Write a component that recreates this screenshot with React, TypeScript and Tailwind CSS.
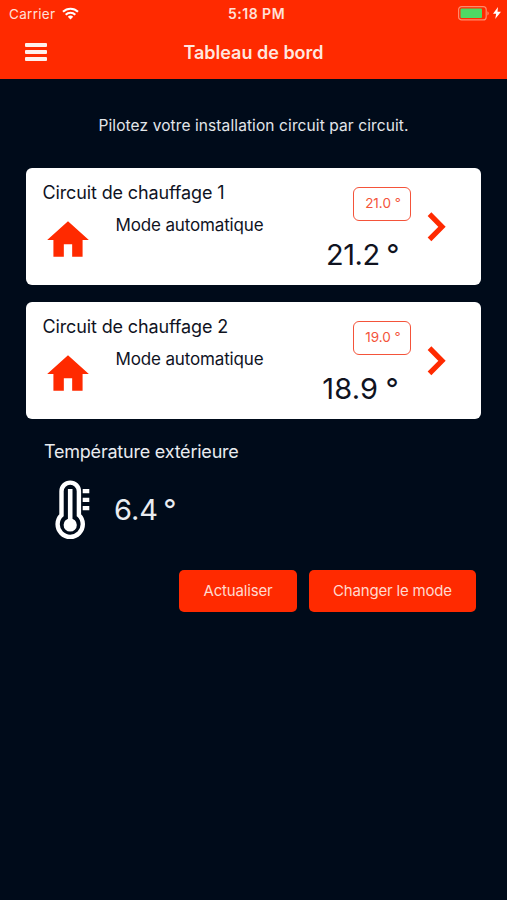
import { MdHome } from 'react-icons/md'

const circuits = [
  { id: 1, name: 'Circuit de chauffage 1', mode: 'Mode automatique', target: '21.0 °', current: '21.2 °', spacing: 'tracking-[-0.5px]' },
  { id: 2, name: 'Circuit de chauffage 2', mode: 'Mode automatique', target: '19.0 °', current: '18.9 °', spacing: 'tracking-[0.2px]' },
]

function StatusBar() {
  return (
    <div className="relative flex h-7 items-center justify-between pl-[9px] pr-[6px] text-[13.5px] leading-7 text-[#ffe0d8]">
      <div className="flex items-center gap-[7px]">
        <span className="tracking-[0.3px]">Carrier</span>
        <svg className="-mt-px" width="17" height="13" viewBox="0 0 17 13" fill="none" stroke="#fff" strokeWidth="2.1">
          <path d="M1 4.8a10.6 10.6 0 0 1 15 0" />
          <path d="M3.7 7.7a6.8 6.8 0 0 1 9.6 0" />
          <path d="M8.5 12.6 5.8 9.8a3.8 3.8 0 0 1 5.4 0z" fill="#fff" stroke="none" />
        </svg>
      </div>
      <span className="absolute inset-x-0 pl-[6px] text-center text-[14px] font-semibold tracking-[0.5px]">5:18 PM</span>
      <div className="flex items-center gap-1">
        <svg className="-mt-[2px]" width="31" height="15" viewBox="0 0 31 15">
          <rect x="0.6" y="0.6" width="27.6" height="13.3" rx="3" fill="none" stroke="#ff8a6c" strokeWidth="1.2" />
          <rect x="2.5" y="2.5" width="21.5" height="9.5" rx="1" fill="#4cd964" />
          <path d="M29.4 5.2c1.8.8 1.8 3.4 0 4.2z" fill="#ff8a6c" />
        </svg>
        <svg className="-mt-[2px]" width="8" height="12" viewBox="0 0 8 12">
          <path d="M5 0 0 6.8h3.2L2.2 12 8 4.8H4.5z" fill="#fff" />
        </svg>
      </div>
    </div>
  )
}

function Header() {
  return (
    <header className="h-[79px] bg-[#ff2a00]">
      <StatusBar />
      <div className="grid h-12 grid-cols-[1fr_auto_1fr] items-center">
        <button className="ml-[25px] flex w-[22px] flex-col gap-[3px]" aria-label="Menu">
          <span className="h-1 w-full rounded-[1px] bg-[#fff0ec]" />
          <span className="h-1 w-full rounded-[1px] bg-[#fff0ec]" />
          <span className="h-1 w-full rounded-[1px] bg-[#fff0ec]" />
        </button>
        <h1 className="text-[18px] font-semibold text-[#ffe6df]">Tableau de bord</h1>
      </div>
    </header>
  )
}

function CircuitCard({ circuit }: { circuit: (typeof circuits)[number] }) {
  return (
    <div className="flex h-[117px] rounded-md bg-white text-[#10131f]">
      <div className="flex-1 pl-[16.5px] pt-[11px]">
        <h2 className="text-[18px] leading-7 tracking-[-0.13px]">{circuit.name}</h2>
        <div className="flex">
          <MdHome className="mt-[8px] size-[50px] text-[#ff2a00]" />
          <p className="ml-[23px] mt-[6px] text-[17px] leading-6 tracking-[-0.15px]">{circuit.mode}</p>
        </div>
      </div>
      <div className="flex w-[100px] flex-col items-end pt-[19px]">
        <span className="flex h-[34px] w-[58px] items-center justify-center rounded-md border-[1.5px] border-[#f4533a] pb-px pl-[2px] text-[13.5px] text-[#f4533a]">
          {circuit.target}
        </span>
        <span className={`mr-[12px] mt-[16px] text-[29px] leading-9 [word-spacing:-1px] ${circuit.spacing}`}>
          {circuit.current}
        </span>
      </div>
      <svg className="ml-[16px] mr-[35px] mt-[44px]" width="19" height="30" viewBox="0 0 19 30">
        <path d="M2.5 2.2 15 14.8 2.5 27.4" fill="none" stroke="#ff2a00" strokeWidth="5.2" />
      </svg>
    </div>
  )
}

function Thermometer() {
  return (
    <svg width="36" height="60" viewBox="0 0 36 60">
      <path
        d="M6.5 11.3a8.7 8.7 0 0 1 17.4 0v23.9a12.6 12.6 0 1 1-17.4 0z"
        fill="none"
        stroke="#fff"
        strokeWidth="4.4"
      />
      <path d="M15.2 9v36" stroke="#fff" strokeWidth="4.6" />
      <circle cx="15.2" cy="45" r="6.6" fill="#fff" />
      <path d="M27.7 11.2h6.6M27.7 19.8h6.6M27.7 28.2h6.6" stroke="#fff" strokeWidth="4.2" />
    </svg>
  )
}

export default function App() {
  return (
    <div className="h-[900px] w-[507px] overflow-hidden bg-[#000b1a] font-['Inter',sans-serif]">
      <Header />
      <main className="pl-[26px] pr-[26px]">
        <p className="pt-[35px] text-center text-[15.5px] leading-6 tracking-[0.1px] text-[#e3e6ea]">
          Pilotez votre installation circuit par circuit.
        </p>
        <div className="mt-[30px] flex flex-col gap-[17px]">
          {circuits.map((circuit) => (
            <CircuitCard key={circuit.id} circuit={circuit} />
          ))}
        </div>

        <section className="pl-[18px] pt-[21px] text-[#e9ecf0]">
          <h2 className="text-[18px] leading-6 tracking-[-0.22px]">Température extérieure</h2>
          <div className="mt-[16px] flex items-center pl-[11px]">
            <Thermometer />
            <span className="ml-[23px] text-[29px] [word-spacing:-3px]">6.4 °</span>
          </div>
        </section>

        <div className="mr-[5px] mt-[29.5px] flex justify-end gap-3 text-[15px] tracking-[-0.18px] text-[#ffd9cf]">
          <button className="h-[42px] w-[118px] rounded-[5px] bg-[#ff2a00] pt-[2px]">Actualiser</button>
          <button className="h-[42px] w-[167px] rounded-[5px] bg-[#ff2a00] pt-[2px]">Changer le mode</button>
        </div>
      </main>
    </div>
  )
}
